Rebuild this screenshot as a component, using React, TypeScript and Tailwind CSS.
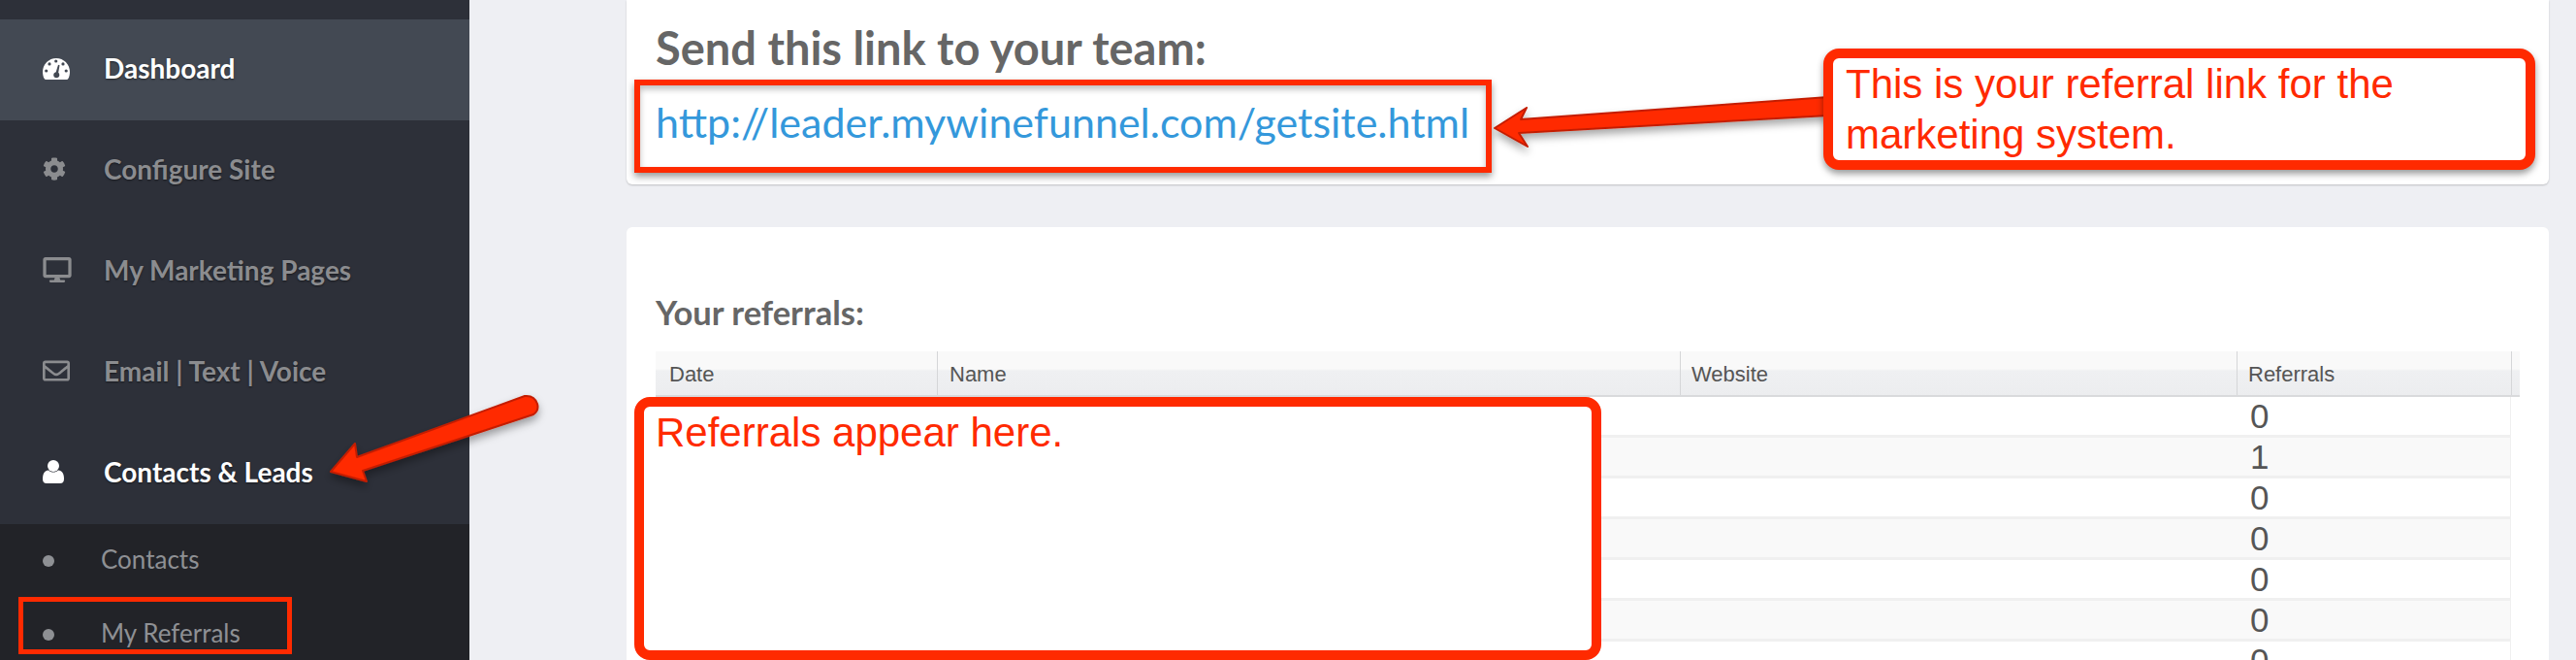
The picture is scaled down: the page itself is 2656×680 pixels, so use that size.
import React from "react";
import { FaCog, FaDesktop, FaRegEnvelope } from "react-icons/fa";

function Gauge({ className }: { className?: string }) {
  return (
    <svg viewBox="0 0 28 22" className={className} fill="currentColor">
      <path d="M14 0C6.300 0 0 6.300 0 14c0 2.500.5 4.700 1.500 6.800.4.800 1 1.200 1.800 1.200h21.400c.8 0 1.400-.4 1.800-1.200C27.500 18.700 28 16.500 28 14 28 6.300 21.700 0 14 0z" />
      <g fill="#434953">
        <circle cx="13.700" cy="3" r="1.600" />
        <circle cx="7" cy="5.900" r="1.600" />
        <circle cx="3.700" cy="13" r="1.600" />
        <circle cx="21" cy="5.900" r="1.600" />
        <circle cx="24.200" cy="13" r="1.600" />
        <path d="M16 6.800l1.500.4-1.300 7.600c.7.600 1.100 1.400 1.100 2.400 0 1.700-1.400 3-3.100 3s-3-1.300-3-3c0-1.500 1-2.700 2.500-3z" />
      </g>
    </svg>
  );
}

function Person({ className }: { className?: string }) {
  return (
    <svg viewBox="0 0 22 24" className={className} fill="currentColor">
      <circle cx="11" cy="6" r="6" />
      <path d="M6 10.500C7.500 12 9 12.600 11 12.600S14.500 12 16 10.500C20 10.800 22 14 22 19.500 22 22.500 20.500 24 18 24H4C1.500 24 0 22.500 0 19.500 0 14 2 10.800 6 10.500Z" />
    </svg>
  );
}

function NavItem({ icon, label, active, bg }: { icon: React.ReactNode; label: string; active?: boolean; bg?: boolean }) {
  return (
    <div
      className={`flex h-[104px] shrink-0 items-center pb-[5px] pl-[44px] text-[28px] font-bold ${active ? "text-white" : "text-[#8b8c8f]"} ${bg ? "bg-[#434953]" : ""}`}
      style={{ fontFamily: '"Lato", sans-serif' }}
    >
      <span className="flex w-[63px] items-center">{icon}</span>
      <span className="[text-shadow:0_1px_2px_rgba(0,0,0,0.5)]">{label}</span>
    </div>
  );
}

function SubItem({ label }: { label: string }) {
  return (
    <div className="flex h-[76px] items-center pl-[44px] text-[26px] text-[#8e9094]" style={{ fontFamily: '"Lato", sans-serif' }}>
      <span className="h-[12px] w-[12px] rounded-full bg-[#8e9094]" />
      <span className="mb-[3px] ml-[48px]">{label}</span>
    </div>
  );
}

const rows = ["0", "1", "0", "0", "0", "0", "0"];

export default function App() {
  return (
    <div className="relative flex h-[680px] w-[2656px] overflow-hidden bg-[#eeeff3]" style={{ fontFamily: '"Liberation Sans", sans-serif' }}>
      <aside className="flex w-[484px] shrink-0 flex-col bg-[#2d3039] pt-[20px]">
        <NavItem active bg icon={<Gauge className="mt-[3px] h-[22px] w-[28px]" />} label="Dashboard" />
        <NavItem icon={<FaCog className="h-[24px] w-[24px]" />} label="Configure Site" />
        <NavItem icon={<FaDesktop className="h-[26px] w-[30px]" />} label="My Marketing Pages" />
        <NavItem icon={<FaRegEnvelope className="h-[28px] w-[28px]" />} label="Email | Text | Voice" />
        <NavItem active icon={<Person className="h-[24px] w-[22px]" />} label="Contacts & Leads" />
        <div className="flex-1 bg-[#222328]">
          <SubItem label="Contacts" />
          <SubItem label="My Referrals" />
        </div>
      </aside>

      <main className="flex flex-1 flex-col pl-[162px] pr-[28px]">
        <section className="h-[190px] shrink-0 rounded-b-[6px] bg-white pl-[30px] pt-[23px] shadow-[0_1px_2px_rgba(0,0,0,0.2)]">
          <h2 className="text-[47px] font-bold leading-[52px] text-[#666]" style={{ fontFamily: '"Lato", sans-serif' }}>
            Send this link to your team:
          </h2>
          <a className="mt-[26px] block text-[43px] leading-[50px] text-[#3498db]" style={{ fontFamily: '"Lato", sans-serif' }}>
            http://leader.mywinefunnel.com/getsite.html
          </a>
        </section>

        <section className="mt-[44px] flex-1 rounded-t-[6px] bg-white pl-[30px] pr-[30px] pt-[70px]">
          <h3 className="text-[34.500px] font-bold leading-[36px] text-[#666]" style={{ fontFamily: '"Lato", sans-serif' }}>
            Your referrals:
          </h3>
          <div className="mt-[22px] flex h-[47px] border-b-2 border-[#d9dadc] bg-[linear-gradient(#f9f9f9_0%,#f9f9f9_40%,#eff0f2_45%,#ecedef_100%)] text-[22px] leading-[47px] text-[#555]">
            <div className="w-[291px] border-r border-[#d5d6d8] pl-[14px]">Date</div>
            <div className="w-[766px] border-r border-[#d5d6d8] pl-[12px]">Name</div>
            <div className="w-[574px] border-r border-[#d5d6d8] pl-[11px]">Website</div>
            <div className="w-[283px] border-r border-[#d5d6d8] pl-[11px]">Referrals</div>
          </div>
          <div className="w-[1913px]">
            {rows.map((r, i) => (
              <div key={i} className={`h-[42px] border-b-[3px] border-r border-[#f0f0f0] pl-[1644px] text-[35px] leading-[39px] text-[#555] ${i % 2 ? "bg-[#f9f9f9]" : "bg-white"}`}>
                {r}
              </div>
            ))}
          </div>
        </section>
      </main>

      {/* annotations */}
      <div className="absolute left-[19px] top-[615px] h-[59px] w-[282px] border-[5px] border-[#ff2a00]" />
      <div className="absolute left-[654px] top-[82px] h-[96px] w-[884px] border-[6px] border-[#ff2a00] shadow-[0_4px_7px_rgba(0,0,0,0.4),inset_0_4px_6px_rgba(0,0,0,0.25)]" />

      <svg className="absolute left-0 top-0 h-[680px] w-[2656px]" viewBox="0 0 2656 680" fill="none">
        <defs>
          <filter id="s" x="-20%" y="-20%" width="140%" height="160%">
            <feDropShadow dx="0" dy="5" stdDeviation="4" floodColor="#000" floodOpacity="0.35" />
          </filter>
        </defs>
        <path filter="url(#s)" d="M368 471 L366 457 L341 486 L378 496 L374 485 L550 427 Q556 423 554 416 Q551 407 541 408 Z" fill="#ff2a00" stroke="#c41f00" strokeWidth="2" strokeLinejoin="round" />
        <path filter="url(#s)" d="M1885 100 L1568 123 L1574 111 L1541 132 L1575 151 L1566 137 L1885 119 Z" fill="#ff2a00" stroke="#c41f00" strokeWidth="2" strokeLinejoin="round" />
      </svg>

      <div className="absolute left-[1880px] top-[50px] h-[125px] w-[734px] rounded-[16px] border-[10px] border-[#ff2a00] bg-white pl-[13px] text-[42px] leading-[52px] text-[#ff2a00] shadow-[0_4px_7px_rgba(0,0,0,0.4)]">
        <p className="mt-[1px]">This is your referral link for the marketing system.</p>
      </div>
      <div className="absolute left-[654px] top-[409px] h-[271px] w-[997px] rounded-[16px] border-[10px] border-[#ff2a00] bg-white pl-[12px] text-[42px] leading-[52px] text-[#ff2a00]">
        <p className="mt-[1px]">Referrals appear here.</p>
      </div>
    </div>
  );
}
